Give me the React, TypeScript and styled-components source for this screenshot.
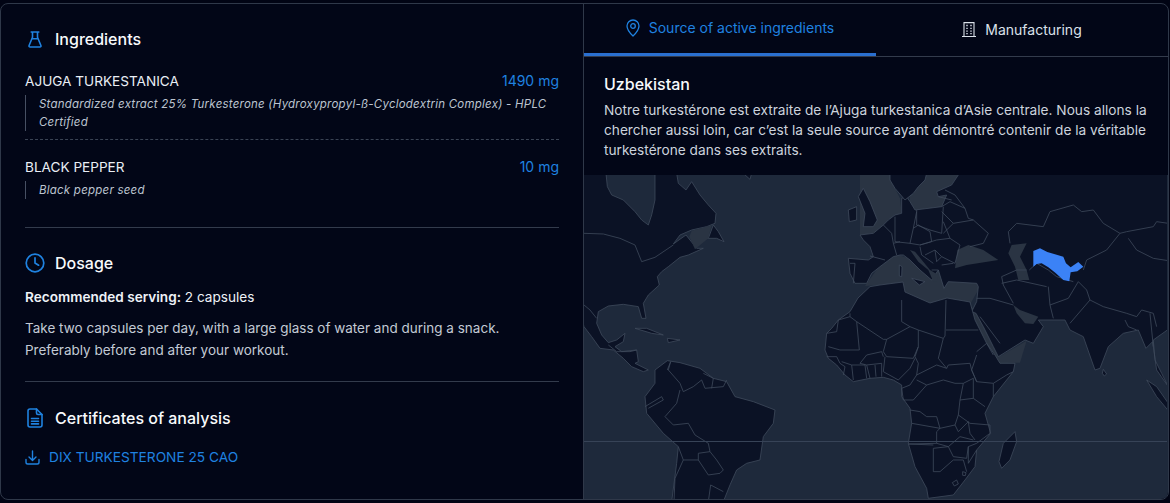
import { FunctionComponent } from 'react'
import styled, { createGlobalStyle } from 'styled-components'

const GlobalStyle = createGlobalStyle`
  html, body {
    margin: 0;
    padding: 0;
    background: #010414;
  }
  body {
    padding-top: 3px;
    font-family: Inter, "Liberation Sans", sans-serif;
    color: #f1f5f9;
    overflow: hidden;
  }
`

const Card = styled.div`
  display: grid;
  grid-template-columns: 583px 1fr;
  box-sizing: border-box;
  width: 1169px;
  height: 497px;
  background: #020617;
  border: 1px solid #2f3849;
  border-radius: 8px;
  overflow: hidden;
`

const LeftPanel = styled.section`
  box-sizing: border-box;
  padding: 21px 24px 0 24px;
  border-right: 1px solid #2f3849;
`

const RightPanel = styled.section`
  display: flex;
  flex-direction: column;
  min-width: 0;
`

const Heading = styled.h2`
  display: flex;
  align-items: center;
  gap: 19px;
  margin: 0;
  height: 28px;
  font-size: 16px;
  line-height: 28px;
  font-weight: 500;
  color: #f8fafc;

  svg {
    flex: none;
    color: #1f82e0;
  }
`

const IconSlot = styled.span`
  display: flex;
  justify-content: center;
  width: 20px;
  margin-right: -9px;
`

const Ingredient = styled.div<{ $first?: boolean }>`
  margin-top: ${(p) => (p.$first ? '18px' : '17px')};
  padding-bottom: ${(p) => (p.$first ? '8px' : '0')};
  border-bottom: ${(p) => (p.$first ? '1px dashed #3a4354' : 'none')};
`

const IngredientRow = styled.div`
  display: flex;
  justify-content: space-between;
  font-size: 13.6px;
  line-height: 20px;
  color: #e9eef5;
`

const Amount = styled.span`
  font-size: 14px;
  color: #1f82e0;
`

const Description = styled.p`
  margin: 4px 0 0;
  padding-left: 13px;
  border-left: 1px solid #475063;
  font-size: 11.5px;
  line-height: 18px;
  letter-spacing: 0.23px;
  font-style: italic;
  color: #bcc4d0;
`

const Divider = styled.hr<{ $top: number }>`
  margin: ${(p) => p.$top}px 0 0;
  border: none;
  border-top: 1px solid #333b4c;
`

const Section = styled.div<{ $top: number }>`
  margin-top: ${(p) => p.$top}px;
`

const Serving = styled.p`
  margin: 10px 0 0;
  font-size: 13.6px;
  line-height: 20px;
  color: #eef2f7;

  strong {
    font-weight: 600;
  }
`

const Body = styled.p`
  margin: 10px 0 0;
  font-size: 13.5px;
  line-height: 22px;
  color: #c3cad5;
`

const DownloadLink = styled.a`
  display: flex;
  align-items: center;
  gap: 9px;
  margin-top: 15px;
  font-size: 13.7px;
  line-height: 20px;
  color: #1f82e0;
  text-decoration: none;
`

const Tabs = styled.div`
  display: grid;
  grid-template-columns: 292px 1fr;
  height: 52px;
  border-bottom: 1px solid #333b4c;
`

const Tab = styled.div<{ $active?: boolean }>`
  display: flex;
  align-items: center;
  justify-content: center;
  gap: 9px;
  height: ${(p) => (p.$active ? '52px' : '51px')};
  box-sizing: border-box;
  padding-bottom: ${(p) => (p.$active ? '2px' : '0')};
  font-size: 14px;
  color: ${(p) => (p.$active ? '#1f82e0' : '#dbe1ea')};
  border-bottom: ${(p) => (p.$active ? '3px solid #2a6fd0' : 'none')};
`

const Source = styled.div`
  box-sizing: border-box;
  height: 118px;
  padding: 16px 20px 0;
`

const SourceTitle = styled.h3`
  margin: 0;
  font-size: 16px;
  line-height: 22px;
  font-weight: 500;
  color: #f8fafc;
`

const SourceText = styled.p`
  margin: 5px 0 0;
  font-size: 13.68px;
  line-height: 20px;
  color: #ccd3dd;
`

const MapFrame = styled.div`
  flex: 1;
  min-height: 0;
  background: #1e293b;

  svg {
    display: block;
  }
`

/* outlines are in 3x crop coords, each group scales its crop back down */
const westLand = [
  '-5,10 78,10 82,50 95,75 130,90 165,125 185,150 205,165 215,135 225,90 225,10 250,10 290,10 295,40 318,60 335,35 360,75 385,105 408,130 405,160 380,170 335,180 300,195 280,222 318,195 350,235 370,235 325,255 300,262 265,290 245,305 232,320 238,345 205,375 190,400 198,445 185,445 175,410 130,403 85,408 55,425 50,460 65,495 85,518 110,510 135,490 130,515 105,530 125,545 170,540 175,575 165,580 205,600 190,605 155,590 130,565 100,540 60,535 35,500 12,470 -5,405',
  '385,205 400,165 415,185 432,215 410,205',
  '165,475 200,475 250,495 215,490',
  '262,505 300,510 265,518',
  '225,600 262,572 300,578 360,595 400,625 440,635 465,680 520,695 585,720 580,760 550,800 540,870 500,880 470,900 450,945 430,995 275,995 290,880 295,830 250,790 200,730 195,680 225,640',
  '835,80 850,55 870,95 892,150 880,170 850,170 855,130',
  '805,120 830,110 830,150 808,155',
  '490,10 515,10 510,28',
]

const westBorders = [
  '12,190 70,192 120,205 165,225 185,275 225,262 280,225',
  '12,405 30,420 50,445',
  '262,600 272,575 265,600 300,640 310,665 340,650 365,630 375,655 430,650 440,630',
  '195,710 245,680 250,690 205,715',
  '255,740 290,700 300,660',
  '255,740 280,765 325,760 345,795 385,820 390,845 355,850 355,870 310,870 295,830',
  '355,870 385,915 420,910 430,900 410,870 390,845',
  '310,870 285,925 282,995',
  '385,995 392,945 430,965',
  '370,610 400,625 395,655',
  '85,525 110,545 150,545 170,540',
]

const greySeas = [
  '-15,348 30,285 70,250 320,330 330,350 302,400 230,390 180,405 105,370 100,340',
  '120,95 135,120 215,110 230,75 205,80 200,65 245,45 268,10 170,10 165,30 135,60 120,75',
  '-30,10 60,10 75,55 90,85 95,130 75,135 55,150 40,165 10,190 -30,195',
  '298,408 328,425 398,565 380,582 342,515',
  '385,562 470,512 450,578 385,580',
]

const eurasia = [
  '-65,265 -5,270 10,260 0,230 -20,210 -30,195 10,190 40,165 55,150 75,135 95,130 95,85 110,80 120,95 135,120 215,110 230,75 205,80 200,65 245,45 265,15 265,10 895,10 895,478 850,510 855,570 875,610 895,650 860,600 848,515 828,535 805,480 760,490 715,530 690,595 675,600 640,500 600,480 585,450 505,450 520,470 490,520 465,510 385,560 370,530 340,470 318,430 305,425 320,395 325,350 320,340 235,335 222,355 205,300 185,330 150,300 120,270 100,255 90,255 70,260 30,290 5,310 -10,340 -45,340 -60,310',
  '60,10 60,30 75,55 105,90 130,70 145,50 165,30 170,10',
  '830,630 860,650 895,700 895,722 860,680',
  '700,598 710,612 703,618 697,610',
  '88,285 96,290 95,320 88,318',
  '125,325 165,335 148,345',
]

const innerSeas = [
  '255,295 262,240 295,225 340,240 385,270 290,285',
  '425,225 470,220 450,260 470,300 478,330 445,330 435,290 415,250',
  '430,405 450,420 505,440 490,462 465,460 440,430',
  '120,240 135,245 180,300 205,315 200,335 190,335 175,300 145,275',
]

const asiaBorders = [
  '415,185 440,160 520,170 540,125 610,105 635,125 670,120 700,160 750,190 710,240 650,270 640,300',
  '750,190 770,185 850,170 860,155 895,160',
  '775,205 800,240 850,265 895,272',
  '415,185 420,220',
  '478,300 500,280 535,300 560,320 610,335',
  '535,350 540,405 550,445',
  '540,405 595,385 625,335',
  '625,335 650,360 660,390 600,460',
  '660,390 700,410 770,430 800,440 815,420 850,430 860,470',
  '395,320 400,345 430,400',
  '320,385 360,385 430,405',
  '330,440 390,520',
  '395,340 440,330 530,350',
  '395,320 440,300 470,300',
  '765,450 775,470 800,480',
  '840,430 850,530',
  '-60,280 -45,280 -50,340',
  '0,258 45,270',
]

// same crop as the eurasia coords shifted by (30,-15)
const europeBorders = [
  '70,150 95,175 100,205 110,240',
  '105,125 105,200 150,205 160,160 170,110',
  '170,105 170,150 210,165 245,175 250,95',
  '160,160 175,150 210,170 215,200 180,210 150,205',
  '180,210 230,195 270,190 300,210 285,265 245,245 225,225',
  '250,140 270,190',
  '250,175 280,145 340,135 385,175 370,205 330,215',
  '245,110 280,145',
  '245,95 270,80 315,100 325,130 340,135',
  '235,65 275,75',
  '255,45 285,60 315,100',
  '180,215 185,240 220,265',
  '225,225 230,260 245,245',
  '245,270 280,265',
  '215,285 235,285',
  '195,240 225,225',
  '120,200 100,205',
]

const africa =
  '249,-54 180,-45 150,-40 114,-6 90,35 55,60 35,85 20,100 15,150 25,175 50,195 75,225 100,245 150,235 190,232 220,240 245,255 245,290 270,325 275,370 265,430 285,500 320,565 325,595 400,585 435,540 465,500 470,450 512,400 495,340 520,290 580,215 585,190 540,190 525,165 500,130 465,60 450,6 381,-6 330,9 255,-24'

const madagascar = '585,395 590,425 570,480 545,505 537,485 550,430'

const africaBorders = [
  '20,100 50,95 55,60 90,50 90,40',
  '25,140 60,150 118,150 110,65 90,50',
  '110,65 190,118 200,118 270,80 245,65 245,0',
  '200,118 190,155 200,170 280,175 295,140 295,90 270,80',
  '295,90 370,115 375,108 378,0',
  '378,90 475,90',
  '370,115 355,175 380,205 385,195 450,190 455,210 470,245',
  '295,140 285,170 295,190 290,225',
  '290,225 350,195 380,205',
  '195,170 190,215 235,240 270,205 285,175',
  '120,190 140,165 185,155 190,170',
  '140,195 150,235',
  '165,195 168,230',
  '185,190 185,230',
  '120,190 140,195 185,190',
  '20,170 50,170 60,190 75,200 70,225',
  '65,185 95,195 100,240',
  '95,195 135,195 140,235',
  '290,225 270,255 245,265 250,300 280,300 320,255',
  '290,240 320,255 370,240 405,250 430,250 460,235',
  '455,210 470,245 520,250 560,225 580,215',
  '470,165 455,210',
  '470,155 500,130 520,165',
  '520,250 520,290',
  '430,250 420,300 460,295 495,320',
  '460,235 460,295',
  '420,300 415,345 450,370 510,375',
  '270,330 300,335 320,350 350,350 360,385 405,375 415,345',
  '275,370 360,385 350,395 350,430 265,432',
  '350,430 385,440 420,410 460,420',
  '405,375 415,395 445,365 450,400 465,420',
  '510,375 510,400 470,430 445,440 445,490 470,450',
  '385,440 400,470 440,475 445,440',
  '340,445 340,515 360,515 400,480 430,480 440,515',
  '340,445 385,440',
  '265,432 340,435',
  '397,548 410,540 415,552 403,558 397,548',
  '428,515 438,518 436,527 428,526 428,515',
]

const uzbekistan =
  '490,243 510,235 532,246 560,254 580,260 588,280 602,292 625,276 640,290 622,304 602,307 598,334 580,330 556,308 535,292 515,280 500,282 490,290'

const Land = styled.polygon`
  fill: #0b1225;
  stroke: #3f4a5c;
  stroke-width: 0.8;
  vector-effect: non-scaling-stroke;
`

const Sea = styled.polygon`
  fill: #2a3443;
`

const Border = styled.polyline`
  fill: none;
  stroke: #3f4a5c;
  stroke-width: 0.8;
  vector-effect: non-scaling-stroke;
`

const WorldMap: FunctionComponent = () => (
  <svg width="583" height="325" viewBox="584 175 583 325">
    <g transform="translate(870 170) scale(0.3333)">
      {greySeas.map((p) => (
        <Sea key={p} points={p} />
      ))}
    </g>
    <g transform="translate(580 170) scale(0.3333)">
      {westLand.map((p) => (
        <Land key={p} points={p} />
      ))}
      <Sea points="335,182 395,165 385,205 345,238 328,200" />
      {westBorders.map((p) => (
        <Border key={p} points={p} />
      ))}
    </g>
    <g transform="translate(870 170) scale(0.3333)">
      {eurasia.map((p) => (
        <Land key={p} points={p} />
      ))}
      {innerSeas.map((p) => (
        <Sea key={p} points={p} />
      ))}
      {asiaBorders.map((p) => (
        <Border key={p} points={p} />
      ))}
      <polygon points={uzbekistan} fill="#3b82f6" />
    </g>
    <g transform="translate(860 175) scale(0.3333)">
      {europeBorders.map((p) => (
        <Border key={p} points={p} />
      ))}
    </g>
    <g transform="translate(820 300) scale(0.3333)">
      <Land points={africa} />
      <Land points={madagascar} />
      {africaBorders.map((p) => (
        <Border key={p} points={p} />
      ))}
    </g>
    <line x1="584" x2="1167" y1="441.5" y2="441.5" stroke="#374357" strokeWidth="1" />
  </svg>
)

const FlaskIcon = () => (
  <svg width="14" height="17" viewBox="0 0 14 17" fill="none" stroke="currentColor" strokeWidth="1.6" strokeLinejoin="round" strokeLinecap="round">
    <path d="M3.2 1h7.600M4.500 1v5.200L1.100 14.500c-.3.9.1 1.500 1 1.500h9.800c.9 0 1.300-.6 1-1.500L9.500 6.200V1M4 7.800h6" />
  </svg>
)

const ClockIcon = () => (
  <svg width="20" height="20" viewBox="0 0 20 20" fill="none" stroke="currentColor" strokeWidth="1.7" strokeLinecap="round" strokeLinejoin="round">
    <circle cx="10" cy="10" r="8.800" />
    <path d="M10 4.800V10l3.600 2.200" />
  </svg>
)

const DocumentIcon = () => (
  <svg width="16" height="20" viewBox="0 0 16 20" fill="none" stroke="currentColor" strokeWidth="1.6" strokeLinecap="round" strokeLinejoin="round">
    <path d="M9.500 1H3a2 2 0 0 0-2 2v14a2 2 0 0 0 2 2h10a2 2 0 0 0 2-2V6.500L9.500 1Z" />
    <path d="M9.500 1v4a1.500 1.500 0 0 0 1.500 1.500h4M4.500 10.500h7M4.500 13.200h7M4.500 15.900h7" />
  </svg>
)

const DownloadIcon = () => (
  <svg width="15" height="15" viewBox="0 0 15 15" fill="none" stroke="currentColor" strokeWidth="1.4" strokeLinecap="round" strokeLinejoin="round">
    <path d="M1 9.500v2.700A1.800 1.800 0 0 0 2.800 14h9.400a1.800 1.800 0 0 0 1.800-1.800V9.500M7.500 1v9M4 7l3.500 3.500L11 7" />
  </svg>
)

const PinIcon = () => (
  <svg width="14" height="18" viewBox="0 0 14 18" fill="none" stroke="currentColor" strokeWidth="1.3">
    <path d="M7 1a6 6 0 0 0-6 6c0 4.200 4.300 8.400 6 10 1.700-1.600 6-5.800 6-10a6 6 0 0 0-6-6Z" strokeLinejoin="round" />
    <circle cx="7" cy="7" r="2.300" />
  </svg>
)

const BuildingIcon = () => (
  <svg width="14" height="15" viewBox="0 0 14 15" fill="none" stroke="currentColor" strokeWidth="1.100">
    <path d="M0 14.500h14M2 14.500V.6h10v13.900" />
    <path d="M4.300 3.500h1.400M8.300 3.500h1.400M4.300 6.300h1.400M8.300 6.300h1.400M4.300 9.100h1.400M8.300 9.100h1.400M4.300 11.700h1.400M8.300 11.700h1.400" strokeWidth="1.300" />
  </svg>
)

const App: FunctionComponent = () => {
  return (
    <>
      <GlobalStyle />
      <Card>
        <LeftPanel>
          <Heading>
            <IconSlot>
              <FlaskIcon />
            </IconSlot>
            Ingredients
          </Heading>
          <Ingredient $first>
            <IngredientRow>
              <span>AJUGA TURKESTANICA</span>
              <Amount>1490 mg</Amount>
            </IngredientRow>
            <Description>
              Standardized extract 25% Turkesterone (Hydroxypropyl-ß-Cyclodextrin Complex) - HPLC Certified
            </Description>
          </Ingredient>
          <Ingredient>
            <IngredientRow>
              <span>BLACK PEPPER</span>
              <Amount>10 mg</Amount>
            </IngredientRow>
            <Description>Black pepper seed</Description>
          </Ingredient>
          <Divider $top={28} />
          <Section $top={21}>
            <Heading>
              <IconSlot>
                <ClockIcon />
              </IconSlot>
              Dosage
            </Heading>
            <Serving>
              <strong>Recommended serving:</strong> 2 capsules
            </Serving>
            <Body>
              Take two capsules per day, with a large glass of water and during a snack.
              <br />
              Preferably before and after your workout.
            </Body>
          </Section>
          <Divider $top={20} />
          <Section $top={22}>
            <Heading>
              <IconSlot>
                <DocumentIcon />
              </IconSlot>
              Certificates of analysis
            </Heading>
            <DownloadLink href="#">
              <DownloadIcon />
              DIX TURKESTERONE 25 CAO
            </DownloadLink>
          </Section>
        </LeftPanel>
        <RightPanel>
          <Tabs>
            <Tab $active>
              <PinIcon />
              Source of active ingredients
            </Tab>
            <Tab>
              <BuildingIcon />
              Manufacturing
            </Tab>
          </Tabs>
          <Source>
            <SourceTitle>Uzbekistan</SourceTitle>
            <SourceText>
              Notre turkestérone est extraite de l’Ajuga turkestanica d’Asie centrale. Nous allons la chercher aussi
              loin, car c’est la seule source ayant démontré contenir de la véritable turkestérone dans ses extraits.
            </SourceText>
          </Source>
          <MapFrame>
            <WorldMap />
          </MapFrame>
        </RightPanel>
      </Card>
    </>
  )
}

export default App
